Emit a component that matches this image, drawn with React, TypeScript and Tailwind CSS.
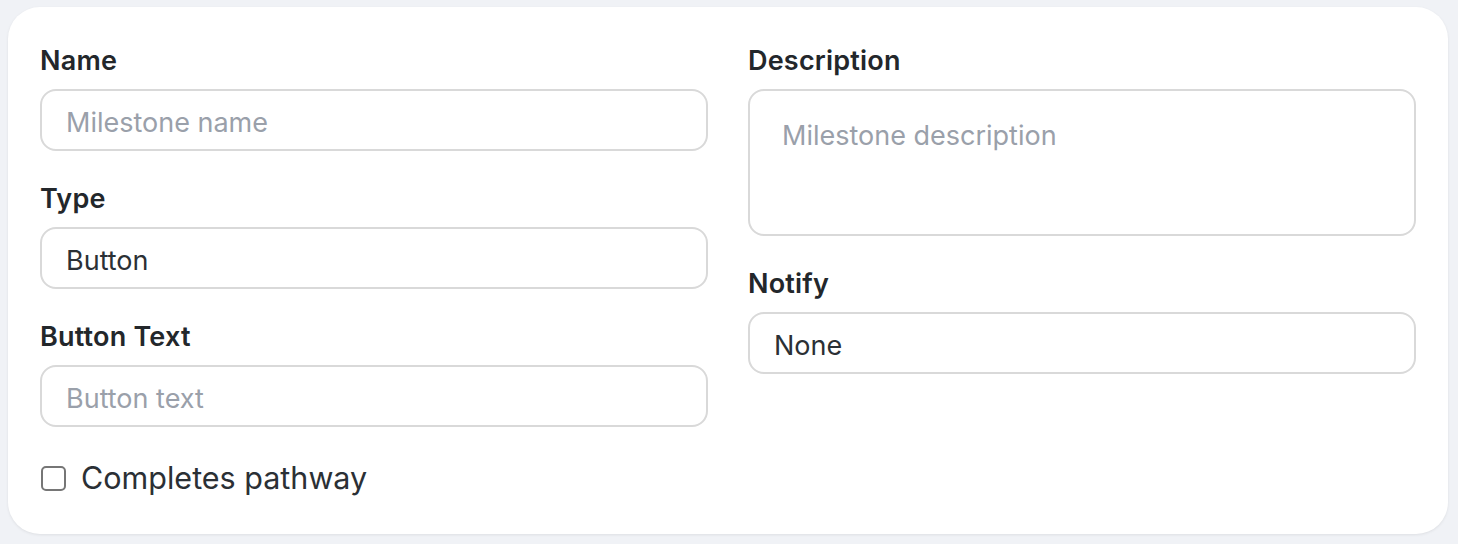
import { useState } from "react";

const inputCls =
  "w-full h-[62px] rounded-[16px] border-2 border-[#d9d9d9] bg-white px-6 pt-[4px] text-[27px] leading-[32px] text-[#2b3035] placeholder:text-[#9aa0aa] outline-none";

function Field({ label, children }: { label: string; children: React.ReactNode }) {
  return (
    <div className="flex flex-col">
      <label className="mb-[10px] text-[27px] leading-[36px] font-semibold tracking-[0.2px] text-[#23272b]">
        {label}
      </label>
      {children}
    </div>
  );
}

export default function App() {
  const [done, setDone] = useState(false);

  return (
    <div
      className="min-h-screen bg-[#f0f2f6] pl-2 pr-[10px] pt-[7px] pb-3"
      style={{ fontFamily: "Inter, 'Noto Sans', sans-serif" }}
    >
      <div className="rounded-[32px] bg-white px-8 pt-[36px] pb-[36px] shadow-[0_1px_3px_rgba(0,0,0,0.08)]">
        <div className="grid grid-cols-2 gap-x-10">
          {/* left column */}
          <div className="flex flex-col gap-[30px]">
            <Field label="Name">
              <input className={inputCls} placeholder="Milestone name" />
            </Field>
            <Field label="Type">
              <input className={inputCls} defaultValue="Button" />
            </Field>
            <Field label="Button Text">
              <input className={inputCls} placeholder="Button text" />
            </Field>
            <label className="mt-px flex items-center gap-[15px] text-[30.5px] leading-[40px] text-[#2b3035]">
              <input
                type="checkbox"
                checked={done}
                onChange={() => setDone(!done)}
                className="ml-px h-[25px] w-[25px] appearance-none rounded-[5px] border-2 border-[#767676] bg-white"
              />
              Completes pathway
            </label>
          </div>

          {/* right column */}
          <div className="flex flex-col gap-[30px]">
            <Field label="Description">
              <textarea
                className="h-[147px] w-full resize-none rounded-[16px] border-2 border-[#d9d9d9] bg-white px-8 pt-[29px] text-[27px] leading-[32px] text-[#2b3035] placeholder:text-[#9aa0aa] outline-none"
                placeholder="Milestone description"
              />
            </Field>
            <Field label="Notify">
              <input className={inputCls} defaultValue="None" />
            </Field>
          </div>
        </div>
      </div>
    </div>
  );
}
